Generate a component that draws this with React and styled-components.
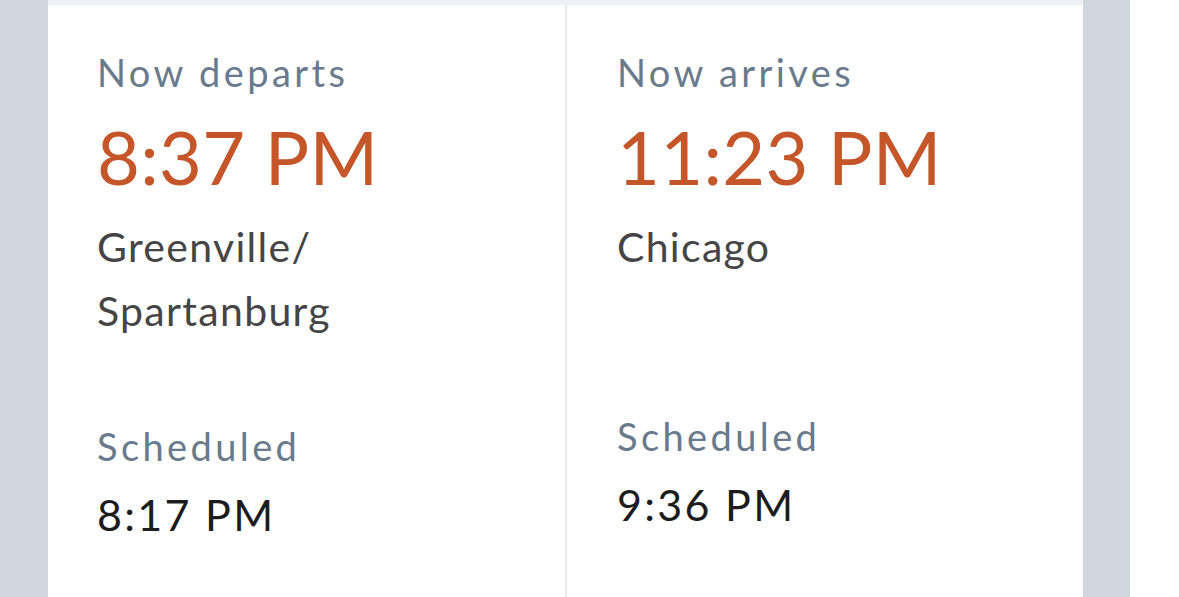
import styled, {createGlobalStyle} from 'styled-components';

const GlobalStyle = createGlobalStyle`
  html, body {
    margin: 0;
    padding: 0;
    background: #ffffff;
  }
  body {
    font-family: Lato, "Open Sans", sans-serif;
  }
`;

const Page = styled.div`
  display: flex;
  width: 1179px;
  height: 597px;
  overflow: hidden;
  background: #ffffff;
`;

const Rail = styled.div`
  width: ${({$w}) => $w}px;
  flex-shrink: 0;
  background: #cfd6de;
`;

const Card = styled.div`
  width: 1035px;
  flex-shrink: 0;
  background: #ffffff;
  display: flex;
  flex-direction: column;
`;

const TopStrip = styled.div`
  height: 5px;
  background: #edf1f6;
`;

const Columns = styled.div`
  flex: 1;
  display: grid;
  grid-template-columns: 517px 2px 1fr;
`;

const Divider = styled.div`
  background: #e9eaec;
`;

const Column = styled.div`
  padding: ${({$pad}) => $pad};
  display: flex;
  flex-direction: column;
`;

const Label = styled.div`
  color: #687a8b;
  font-size: 38px;
  letter-spacing: 3.4px;
  line-height: 1.3;
`;

const NowTime = styled.div`
  color: #c5562a;
  font-size: 74px;
  letter-spacing: 0.3px;
  line-height: 1;
  margin-top: 23px;
`;

const City = styled.div`
  color: #454545;
  font-size: 41px;
  letter-spacing: 1.3px;
  line-height: 64px;
  margin-top: 21px;
  min-height: 118px;
`;

const Scheduled = styled(Label)`
  margin-top: 79px;
`;

const SchedTime = styled.div`
  color: #1c1c1c;
  font-size: 43px;
  letter-spacing: 2.3px;
  line-height: 1.3;
  margin-top: 15px;
`;

const Leg = ({pad, label, time, city, scheduled}) => (
  <Column $pad={pad}>
    <Label>{label}</Label>
    <NowTime>{time}</NowTime>
    <City>{city}</City>
    <Scheduled>Scheduled</Scheduled>
    <SchedTime>{scheduled}</SchedTime>
  </Column>
);

export default function App() {
  return (
    <>
      <GlobalStyle />
      <Page>
        <Rail $w={48} />
        <Card>
          <TopStrip />
          <Columns>
            <Leg
              pad="43px 20px 0 49px"
              label="Now departs"
              time="8:37 PM"
              city={<>Greenville/<br />Spartanburg</>}
              scheduled="8:17 PM"
            />
            <Divider />
            <Leg
              pad="43px 20px 0 50px"
              label="Now arrives"
              time="11:23 PM"
              city="Chicago"
              scheduled="9:36 PM"
            />
          </Columns>
        </Card>
        <Rail $w={47} />
      </Page>
    </>
  );
}
